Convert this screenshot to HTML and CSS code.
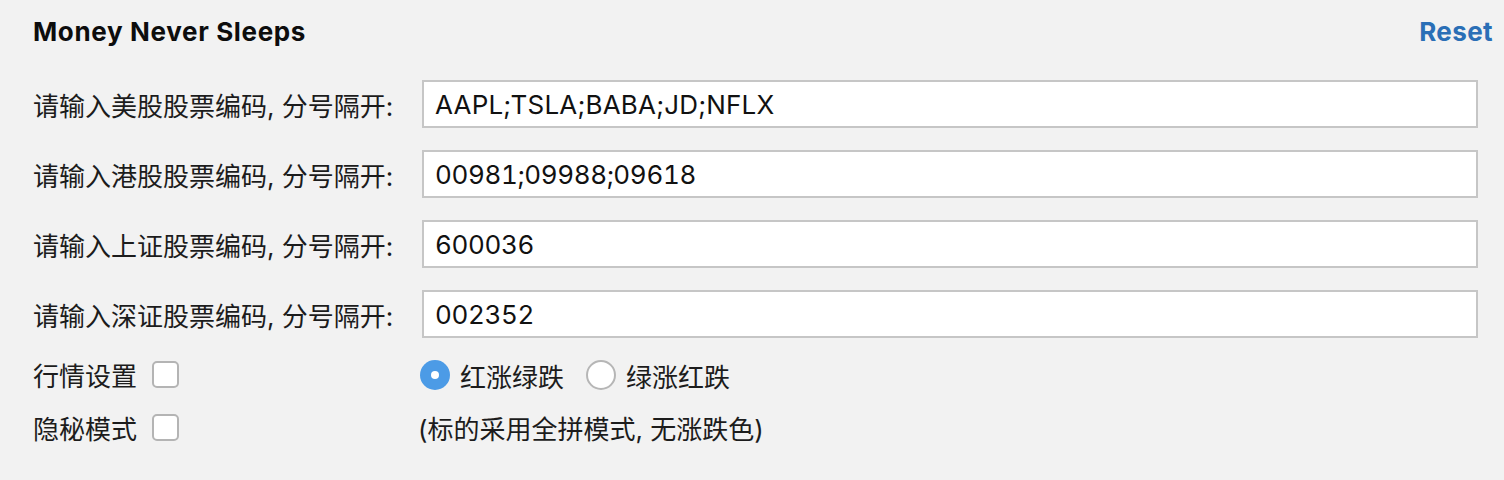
FILE: index.html
```html
<!DOCTYPE html>
<html lang="zh">
<head>
<meta charset="utf-8">
<title>Money Never Sleeps</title>
<link rel="stylesheet" href="styles.css">
</head>
<body>
<div class="panel">
  <div class="header">
    <div class="title">Money Never Sleeps</div>
    <a class="reset" href="#">Reset</a>
  </div>
  <div class="form">
    <label class="label">请输入美股股票编码, 分号隔开:</label>
    <div class="field field-text">AAPL;TSLA;BABA;JD;NFLX</div>

    <label class="label">请输入港股股票编码, 分号隔开:</label>
    <div class="field field-num">00981;09988;09618</div>

    <label class="label">请输入上证股票编码, 分号隔开:</label>
    <div class="field field-num">600036</div>

    <label class="label">请输入深证股票编码, 分号隔开:</label>
    <div class="field field-num">002352</div>

    <div class="check-row">
      <span>行情设置</span>
      <span class="checkbox"></span>
    </div>
    <div class="radios">
      <span class="radio checked"></span>
      <span class="radio-text">红涨绿跌</span>
      <span class="radio"></span>
      <span class="radio-text">绿涨红跌</span>
    </div>

    <div class="check-row">
      <span>隐秘模式</span>
      <span class="checkbox"></span>
    </div>
    <div class="note">(标的采用全拼模式, 无涨跌色)</div>
  </div>
</div>
</body>
</html>
```

FILE: styles.css
```css
html, body {
  margin: 0;
  padding: 0;
  background: #f2f2f2;
}
body {
  font-family: Inter, "Noto Sans CJK SC", sans-serif;
  font-size: 26px;
  color: #1c1c1c;
  width: 1504px;
  height: 480px;
  overflow: hidden;
}
.panel {
  padding: 14px 11px 0 33px;
}
.header {
  display: flex;
  justify-content: space-between;
  align-items: center;
  height: 34px;
}
.title {
  font-weight: 700;
  color: #0d0d0d;
  letter-spacing: 0.65px;
}
.reset {
  font-weight: 700;
  color: #2a6fb6;
  text-decoration: none;
  letter-spacing: 0.4px;
}
.form {
  margin-top: 32px;
  margin-right: 15px;
  display: grid;
  grid-template-columns: 387px 1fr;
  grid-template-rows: 48px 48px 48px 48px 30px 30px;
  row-gap: 22px;
  align-items: center;
}
.form > :nth-child(9) {
  margin-top: -1px;
}
.label {
  white-space: nowrap;
}
.field {
  margin-left: 2px;
  height: 48px;
  box-sizing: border-box;
  border: 2px solid #c6c6c6;
  background: #fff;
  padding: 0 11px;
  display: flex;
  align-items: center;
  color: #111;
}
.field-text {
  letter-spacing: 0.2px;
}
.field-num {
  font-variant-numeric: tabular-nums;
  letter-spacing: -0.35px;
}
.check-row {
  display: flex;
  align-items: center;
  gap: 15px;
}
.checkbox {
  width: 27px;
  height: 27px;
  box-sizing: border-box;
  border: 2px solid #b4b4b4;
  border-radius: 5px;
  background: #fff;
}
.radios {
  display: flex;
  align-items: center;
}
.radio {
  width: 30px;
  height: 30px;
  box-sizing: border-box;
  border-radius: 50%;
  border: 2px solid #b6b6b6;
  background: #fff;
  position: relative;
}
.radio.checked {
  border: none;
  background: #4c9be6;
}
.radio.checked::after {
  content: "";
  position: absolute;
  left: 11px;
  top: 11px;
  width: 8px;
  height: 8px;
  border-radius: 50%;
  background: #fff;
}
.radio-text {
  margin-left: 10px;
  margin-right: 22px;
}
.note {
  margin-left: -2px;
}
```
